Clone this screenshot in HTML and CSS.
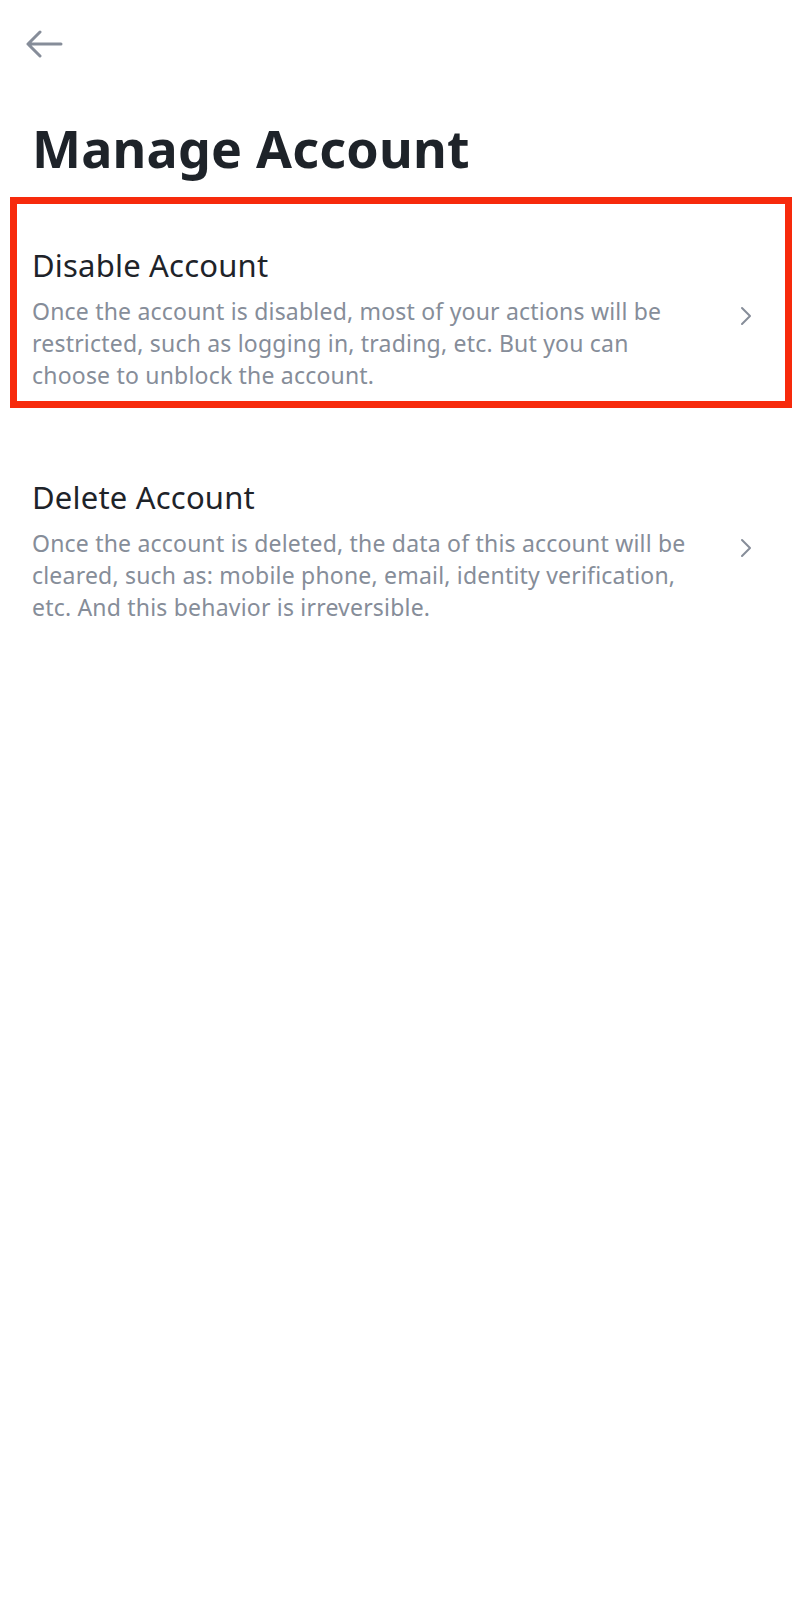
FILE: index.html
```html
<!DOCTYPE html>
<html lang="en">

<head>
    <meta charset="UTF-8">
    <meta name="viewport" content="width=device-width, initial-scale=1.0">
    <title>Manage Account</title>
    <link rel="stylesheet" href="styles.css">
</head>

<body>
    <!-- top bar -->
    <div class="topbar">
        <svg class="back-icon" width="38" height="28" viewBox="0 0 38 28">
            <path d="M3 14 H36 M15 2 L3 14 L15 26" fill="none" stroke="#868d99" stroke-width="3" stroke-linecap="round" stroke-linejoin="round"/>
        </svg>
    </div>

    <h1 class="page-title">Manage Account</h1>

    <div class="menu">
        <div class="menu-item marked">
            <div class="item-title">Disable Account</div>
            <div class="item-row">
                <div class="item-desc">Once the account is disabled, most of your actions will be restricted, such as logging in, trading, etc. But you can choose to unblock the account.</div>
                <svg class="chevron" width="12" height="20" viewBox="0 0 12 20">
                    <path d="M2 2 L10 10 L2 18" fill="none" stroke="#868d99" stroke-width="2" stroke-linecap="round" stroke-linejoin="round"/>
                </svg>
            </div>
        </div>

        <div class="menu-item">
            <div class="item-title">Delete Account</div>
            <div class="item-row">
                <div class="item-desc">Once the account is deleted, the data of this account will be cleared, such as: mobile phone, email, identity verification, etc. And this behavior is irreversible.</div>
                <svg class="chevron" width="12" height="20" viewBox="0 0 12 20">
                    <path d="M2 2 L10 10 L2 18" fill="none" stroke="#868d99" stroke-width="2" stroke-linecap="round" stroke-linejoin="round"/>
                </svg>
            </div>
        </div>
    </div>
</body>

</html>
```

FILE: styles.css
```css
body {
    margin: 0;
    background-color: #ffffff;
    font-family: "Noto Sans", Arial, sans-serif;
    color: #1e2329;
}

.topbar {
    height: 28px;
    padding: 30px 25px 0 25px;
}

.back-icon {
    display: block;
}

.page-title {
    margin: 58px 0 0 0;
    padding-left: 32px;
    font-size: 52px;
    line-height: 64px;
    font-weight: 700;
    letter-spacing: 0.2px;
    color: #1e2329;
}

.menu {
    margin-top: 17px;
    padding: 0 8px 0 10px;
    display: flex;
    flex-direction: column;
    gap: 21px;
}

.menu-item {
    border: 7px solid transparent;
    padding: 41px 33px 10px 15px;
    cursor: pointer;
}

/* red annotation box */
.menu-item.marked {
    border-color: #f72a0c;
}

.item-title {
    font-size: 31px;
    line-height: 40px;
    letter-spacing: 0.2px;
    color: #1e2329;
}

.item-row {
    display: flex;
    align-items: flex-start;
    gap: 46px;
    margin-top: 10px;
}

.item-desc {
    flex: 1;
    font-size: 23px;
    line-height: 32px;
    letter-spacing: 0.2px;
    color: #868d99;
}

.chevron {
    flex-shrink: 0;
    margin-top: 11px;
}
```
